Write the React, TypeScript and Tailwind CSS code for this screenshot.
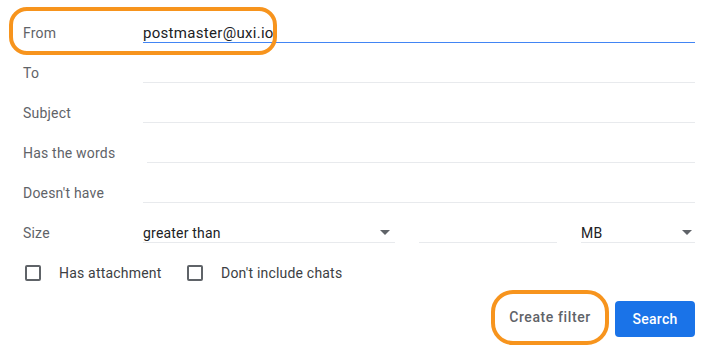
import React from 'react';

const rows = [
    { label: 'From', value: 'postmaster@uxi.io', active: true, labelWidth: 'w-[120px]' },
    { label: 'To', value: '', active: false, labelWidth: 'w-[120px]' },
    { label: 'Subject', value: '', active: false, labelWidth: 'w-[120px]' },
    { label: 'Has the words', value: '', active: false, labelWidth: 'w-[124px]' },
    { label: "Doesn't have", value: '', active: false, labelWidth: 'w-[120px]' },
];

const Arrow: React.FC = () => (
    <svg width="10" height="5" viewBox="0 0 10 5" className="shrink-0">
        <polygon points="0,0 10,0 5,5" fill="#5f6368" />
    </svg>
);

const Checkbox: React.FC<{ label: string; className?: string }> = ({ label, className }) => (
    <div className={'flex items-center ' + (className || '')}>
        <span className="ml-[2px] w-4 h-4 rounded-[2px] border-2 border-[#5f6368]"></span>
        <span className="ml-[18px] text-[14px] leading-[20px] tracking-[0.2px] text-[#3c4043]">{label}</span>
    </div>
);

export default function App() {
    return (
        <div className="relative w-[718px] h-[358px] bg-white font-['Roboto',sans-serif] px-[23px] pt-[13px]">
            {rows.map((row) => (
                <div key={row.label} className="flex h-[40px] items-start">
                    <div className={'pt-[10px] text-[14px] leading-[20px] tracking-[0.2px] text-[#5f6368] ' + row.labelWidth}>
                        {row.label}
                    </div>
                    <div
                        className={
                            'flex-1 h-[30px] pt-[10px] text-[15px] leading-[20px] tracking-[0.3px] text-[#202124] border-b ' +
                            (row.active ? 'border-[#4285f4]' : 'border-[#e8eaed]')
                        }
                    >
                        {row.value}
                    </div>
                </div>
            ))}

            <div className="flex h-[40px] items-start">
                <div className="w-[120px] pt-[10px] text-[14px] leading-[20px] tracking-[0.2px] text-[#5f6368]">Size</div>
                <div className="w-[252px] h-[30px] pt-[10px] flex items-center justify-between pr-[5px] border-b border-[#e8eaed] text-[14px] leading-[20px] tracking-[0.2px] text-[#202124]">
                    <span>greater than</span>
                    <Arrow />
                </div>
                <div className="ml-[24px] w-[138px] h-[30px] border-b border-[#e8eaed]"></div>
                <div className="ml-[24px] flex-1 h-[30px] pt-[10px] flex items-center justify-between pr-[3px] border-b border-[#e8eaed] text-[14px] leading-[20px] tracking-[0.2px] text-[#202124]">
                    <span>MB</span>
                    <Arrow />
                </div>
            </div>

            <div className="flex h-[40px] items-center">
                <Checkbox label="Has attachment" className="w-[162px]" />
                <Checkbox label="Don't include chats" />
            </div>

            <div className="flex justify-end items-center -mt-[3px]">
                <button className="w-[118px] h-[55px] rounded-[22px] border-4 border-[#f7941d] text-[14px] font-medium tracking-[0.6px] text-[#5f6368]">
                    Create filter
                </button>
                <button className="ml-[6px] mt-[3px] w-[80px] h-[36px] rounded-[4px] bg-[#1a73e8] text-[14px] font-medium tracking-[0.3px] text-white">
                    Search
                </button>
            </div>

            <div className="absolute left-[9px] top-[7px] w-[268px] h-[48px] rounded-[18px] border-4 border-[#f7941d]"></div>
        </div>
    );
}
